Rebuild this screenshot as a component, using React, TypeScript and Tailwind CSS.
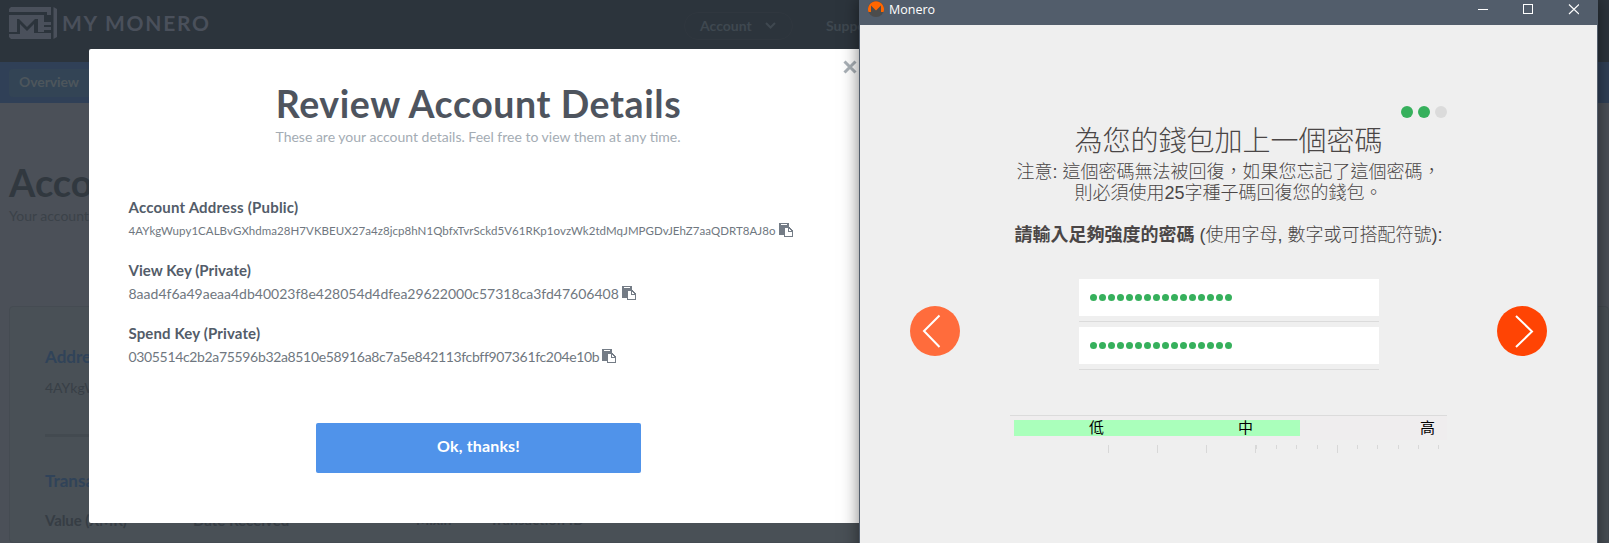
import type { ReactNode } from "react";

function Logo() {
  return (
    <svg width="48" height="32" viewBox="0 0 48 32" fill="#4a505b">
      <path d="M2 0H42V8H38V5H0V2Z" />
      <path d="M44.500 0L48 2V30L44.500 32Z" />
      <path d="M0 8H35V15H42V18H35V20H42V23H35V25H29V12H26L18 20L10 12H8V25H0Z" />
      <path d="M11 17L18 24L25 17V26H42V32H2L0 30V27H11Z" />
    </svg>
  );
}

function CopyIcon() {
  return (
    <svg width="14" height="14" viewBox="0 0 14 14" className="shrink-0" shapeRendering="crispEdges">
      <path d="M0 0H10V4H5V12H0Z" fill="#747c86" />
      <path d="M2 1.500H8" stroke="#fff" />
      <path d="M5.500 4.500H10L13.500 8V13.500H5.500Z" fill="#fff" stroke="#747c86" />
      <path d="M9.500 4.500V8.500H13.500" fill="none" stroke="#747c86" />
    </svg>
  );
}

function Detail({ label, labelClass, valueClass, value }: { label: string; labelClass: string; valueClass: string; value: string }) {
  return (
    <div className="h-[63px]">
      <div className={`text-[15px] leading-5 font-bold text-[#535c69] ${labelClass}`}>{label}</div>
      <div className="mt-px flex h-6 items-center gap-[3px] text-[#6f7780]">
        <span className={`whitespace-nowrap ${valueClass}`}>{value}</span>
        <CopyIcon />
      </div>
    </div>
  );
}

function AccountPage() {
  return (
    <div className="flex h-full flex-col bg-[#4b5058] whitespace-nowrap">
      <header className="flex h-[62px] shrink-0 bg-[#2c343c]">
        <div className="mt-[7px] flex h-8 w-[684px] items-center pl-[9px]">
          <Logo />
          <span className="ml-[5px] text-[21px] leading-8 font-bold tracking-[1.75px] text-[#4a505b]">MY MONERO</span>
        </div>
        <div className="mt-3 flex h-7 w-[109px] items-center justify-between rounded-full border border-[#30373f] pr-4 pb-[2px] pl-[15px] text-[14px] font-bold text-[#3f4850]">
          Account
          <svg width="11" height="7" viewBox="0 0 11 7" fill="none" stroke="#3f4850" strokeWidth="2">
            <path d="M1 1L5.500 5.500L10 1" />
          </svg>
        </div>
        <span className="mt-4 ml-[33px] text-[14px] leading-5 font-bold text-[#3f4850]">Support</span>
      </header>
      <nav className="flex h-[41px] shrink-0 items-center bg-[#304057] pl-[9px]">
        <span className="h-7 w-[90px] rounded-sm bg-[#334455] pl-[10px] text-[14px] leading-[26px] font-bold tracking-[-0.1px] text-[#4d565c]">Overview</span>
      </nav>
      <main className="flex grow flex-col pt-[57px] pl-[9px]">
        <h1 className="text-[38px] leading-[44px] font-bold text-[#31383f]">Account</h1>
        <p className="mt-[2px] text-[14px] leading-5 text-[#3b4249]">Your account</p>
        <section className="mt-[80px] grow rounded-sm border border-[#454b52] bg-[#495056] pt-[38px] pl-[35px]">
          <h2 className="text-[17px] leading-6 font-bold text-[#304359]">Address</h2>
          <p className="mt-[9px] text-[14px] leading-5 text-[#383f46]">4AYkgWupy</p>
          <div className="mt-9 h-[3px] w-[700px] bg-[#434a50]" />
          <h2 className="mt-8 text-[17px] leading-6 font-bold text-[#304359]">Transactions</h2>
          <div className="mt-[17px] flex text-[15px] leading-5 font-bold text-[#363d44]">
            <span className="w-[148px] tracking-[-0.1px]">Value (XMR)</span>
            <span className="w-[223px]">Date Received</span>
            <span className="w-[74px] text-[14px]">Mixin</span>
            <span className="text-[14px] tracking-[0.3px]">Transaction ID</span>
          </div>
        </section>
      </main>
    </div>
  );
}

function ReviewModal() {
  return (
    <div className="absolute top-[49px] left-[89px] flex h-[474px] w-[778px] flex-col rounded-[2px] bg-white pt-[32px] text-center">
      <svg className="absolute top-[11px] left-[754px]" width="14" height="14" viewBox="0 0 14 14" stroke="#a9b0b6" strokeWidth="3">
        <path d="M1.500 1.500L12.500 12.500M12.500 1.500L1.500 12.500" />
      </svg>
      <h1 className="pl-px text-[37.5px] leading-[45px] font-bold tracking-[0.58px] text-[#4e545e]">Review Account Details</h1>
      <p className="mt-px text-[14px] leading-5 text-[#a4acb4]">These are your account details. Feel free to view them at any time.</p>
      <div className="mt-[50px] pl-[39.5px] text-left">
        <Detail label="Account Address (Public)" labelClass="tracking-[0.2px]" valueClass="text-[11.5px] tracking-[0.05px] pt-px" value="4AYkgWupy1CALBvGXhdma28H7VKBEUX27a4z8jcp8hN1QbfxTvrSckd5V61RKp1ovzWk2tdMqJMPGDvJEhZ7aaQDRT8AJ8o" />
        <Detail label="View Key (Private)" labelClass="tracking-[0.05px]" valueClass="text-[14px]" value="8aad4f6a49aeaa4db40023f8e428054d4dfea29622000c57318ca3fd47606408" />
        <Detail label="Spend Key (Private)" labelClass="tracking-[0.13px]" valueClass="text-[14px] tracking-[-0.34px]" value="0305514c2b2a75596b32a8510e58916a8c7a5e842113fcbff907361fc204e10b" />
      </div>
      <button className="mt-[37px] ml-[227px] h-[50px] w-[325px] rounded-[2px] bg-[#5093ea] pb-[4px] text-[16px] font-bold tracking-[0.16px] text-white">Ok, thanks!</button>
    </div>
  );
}

function TitleBar() {
  return (
    <div className="flex h-[25px] shrink-0 bg-[#525d6b] pl-[8px]">
      <svg className="mt-px" width="16" height="16" viewBox="0 0 16 16">
        <circle cx="8" cy="8" r="8" fill="#4c4c4c" />
        <path d="M0.500 11A8 8 0 1 1 15.500 11H13V4.500L8 9.500L3 4.500V11Z" fill="#ff6600" />
      </svg>
      <span className="ml-[5px] grow font-['Open_Sans',sans-serif] text-[12.5px] leading-[19px] text-white">Monero</span>
      <svg className="mt-1 mr-[18px]" width="101" height="11" viewBox="0 0 101 11" fill="none" stroke="#fff">
        <path d="M0 5.500H10" />
        <rect x="45.500" y="0.500" width="9" height="9" />
        <path d="M91 0.500L101 10M101 0.500L91 10" strokeWidth="1.200" />
      </svg>
    </div>
  );
}

function ArrowButton({ className, d }: { className: string; d: string }) {
  return (
    <button className={`flex size-[50px] items-center justify-center rounded-full ${className}`}>
      <svg width="50" height="50" viewBox="0 0 50 50" fill="none" stroke="#fff" strokeWidth="2">
        <path d={d} />
      </svg>
    </button>
  );
}

function PasswordField() {
  return (
    <div className="h-12">
      <div className="flex h-[37px] items-center gap-[2px] bg-white pb-px pl-[11px]">
        {Array.from({ length: 16 }, (_, i) => (
          <span key={i} className="size-[7px] rounded-full bg-[#36b05c]" />
        ))}
      </div>
      <div className="mt-[5px] h-px bg-[#dbdbdb]" />
    </div>
  );
}

function StrengthMeter() {
  const major = [98, 147, 196, 245, 327];
  const minor = [246, 266, 286, 307, 347, 367, 388, 408, 428];
  return (
    <div className="mt-10 text-black">
      <div className="h-[25px] border-t border-[#dbdbdb] bg-[#efedee] pt-1 pl-1">
        <div className="h-4 w-[286px] bg-[#aaffbb]">
          <div className="flex h-4 w-[430px] items-center text-[15px] leading-4">
            <span className="ml-[75px] w-[149px]">低</span>
            <span className="w-[182px]">中</span>
            <span>高</span>
          </div>
        </div>
      </div>
      <svg className="mt-[5px] block" width="437" height="8" viewBox="0 0 437 8" fill="#d8d8d8">
        {major.map((x) => <rect key={x} x={x} y="0" width="1" height="8" />)}
        {minor.map((x) => <rect key={x} x={x} y="0" width="1" height="4" />)}
      </svg>
    </div>
  );
}

function Line({ className, children }: { className: string; children: ReactNode }) {
  return <p className={`flex justify-center whitespace-pre ${className}`}>{children}</p>;
}

function WalletWindow() {
  return (
    <div className="absolute -top-px left-[859px] flex h-[560px] w-[739px] flex-col border border-[#525d6b] bg-[#efefef] shadow-[0_0_16px_rgba(0,0,0,0.5)]">
      <TitleBar />
      <div className="flex grow font-['Liberation_Sans','Noto_Sans_CJK_TC',sans-serif] text-[#4a4646]">
        <div className="w-[150px] pt-[281px] pl-[50px]">
          <ArrowButton className="bg-[#ff6c3c]" d="M29.500 9.500L14 25L29.500 41" />
        </div>
        <div className="w-[437px]">
          <div className="mt-[81px] flex justify-end gap-[5px]">
            <span className="size-3 rounded-full bg-[#36b05c]" />
            <span className="size-3 rounded-full bg-[#36b05c]" />
            <span className="size-3 rounded-full bg-[#dbdbdb]" />
          </div>
          <Line className="mt-[4px] text-[28px] leading-10 font-light">為您的錢包加上一個密碼</Line>
          <Line className="text-[18px] leading-[21px] font-light">注意: 這個密碼無法被回復，如果您忘記了這個密碼，</Line>
          <Line className="text-[18px] leading-[21px] font-light">則必須使用25字種子碼回復您的錢包。</Line>
          <Line className="mt-[21px] text-[18px] leading-[21px] font-light">
            <b className="font-bold">請輸入足夠強度的密碼</b> (使用字母, 數字或可搭配符號):
          </Line>
          <div className="mx-auto mt-[33px] w-[300px]">
            <PasswordField />
            <PasswordField />
          </div>
          <StrengthMeter />
        </div>
        <div className="pt-[281px] pl-[50px]">
          <ArrowButton className="bg-[#ff4404]" d="M19 10L35 25.500L19 41" />
        </div>
      </div>
    </div>
  );
}

export default function App() {
  return (
    <div className="relative h-[543px] w-[1609px] overflow-hidden font-['Lato',sans-serif]">
      <AccountPage />
      <ReviewModal />
      <WalletWindow />
    </div>
  );
}
